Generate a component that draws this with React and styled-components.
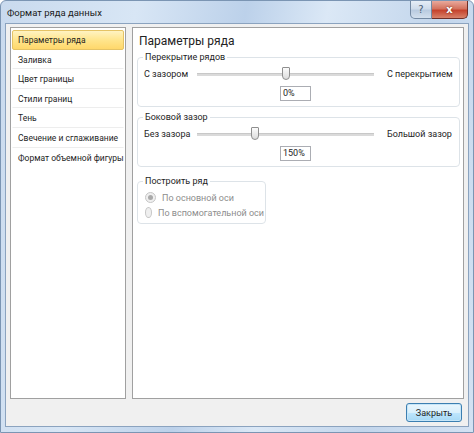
import React from 'react';
import styled, { createGlobalStyle } from 'styled-components';

const GlobalStyle = createGlobalStyle`
  html, body { margin: 0; padding: 0; background: #ffffff; }
  body { font-family: Roboto, "Noto Sans", sans-serif; font-size: 9px; color: #1e1e1e; }
`;

const Window = styled.div`
  width: 474px;
  height: 433px;
  box-sizing: border-box;
  display: flex;
  flex-direction: column;
  border: 1px solid #7b95b3;
  border-radius: 6px 6px 0 0;
  background: linear-gradient(100deg, #c9daee 0%, #d8e6f5 25%, #bcd1ea 45%, #dbe8f6 60%, #c3d6ec 80%, #d3e2f3 100%);
  overflow: hidden;
`;

const TitleBar = styled.div`
  height: 22px;
  display: flex;
  align-items: flex-start;
  padding-left: 6px;
`;

const Title = styled.div`
  font-size: 9.5px;
  line-height: 23px;
  color: #1b1b1b;
`;

const Controls = styled.div`
  margin-left: auto;
  margin-right: 5px;
  display: flex;
`;

const CtrlButton = styled.div`
  height: 18px;
  width: ${(p) => (p.wide ? '36px' : '22px')};
  box-sizing: border-box;
  display: flex;
  align-items: center;
  justify-content: center;
  font-family: "DejaVu Sans", sans-serif;
  font-size: 10px;
  font-weight: ${(p) => (p.wide ? 'bold' : 'normal')};
  color: ${(p) => (p.wide ? '#ffffff' : '#4b5d74')};
  border: 1px solid ${(p) => (p.wide ? '#6e2e27' : '#7389a3')};
  border-top: none;
  border-left: ${(p) => (p.wide ? 'none' : undefined)};
  border-radius: ${(p) => (p.wide ? '0 0 5px 0' : '0 0 0 5px')};
  background: ${(p) =>
    p.wide
      ? 'linear-gradient(#e9a99c 0%, #d4735f 45%, #c5432d 55%, #d8826a 100%)'
      : 'linear-gradient(#e6eef7 0%, #cfdceb 45%, #b9cbe0 55%, #d3e0ee 100%)'};
  text-shadow: ${(p) => (p.wide ? '0 0 2px #5a1a12' : 'none')};
`;

const Body = styled.div`
  flex: 1;
  margin: 0 4px 5px 4px;
  border: 1px solid #8ba3bf;
  background: #f0f0f0;
  display: flex;
  flex-direction: column;
  padding: 3px 4px 4px 4px;
`;

const Main = styled.div`
  flex: 1;
  display: flex;
  gap: 6px;
`;

const Nav = styled.div`
  width: 116px;
  box-sizing: border-box;
  background: #ffffff;
  border: 1px solid #a0a0a0;
  padding: 2px 1px;
  display: flex;
  flex-direction: column;
`;

const NavItem = styled.div`
  box-sizing: border-box;
  height: 19.6px;
  line-height: 18px;
  padding-left: 5px;
  font-size: 8.5px;
  white-space: nowrap;
  border: 1px solid ${(p) => (p.active ? '#e5c365' : 'transparent')};
  border-bottom: 1px solid ${(p) => (p.active ? '#e5c365' : '#ededed')};
  border-radius: ${(p) => (p.active ? '2px' : '0')};
  background: ${(p) => (p.active ? 'linear-gradient(#fff3c2 0%, #ffe58d 50%, #ffd86b 100%)' : 'transparent')};
  &:last-child { border-bottom-color: transparent; }
`;

const Panel = styled.div`
  flex: 1;
  background: #ffffff;
  border: 1px solid #a0a0a0;
  padding: 4px 3px 0 4px;
  display: flex;
  flex-direction: column;
  align-items: stretch;
`;

const PanelTitle = styled.div`
  font-size: 12px;
  line-height: 18px;
  color: #222;
  padding-left: 2px;
  margin-bottom: 1px;
`;

const Group = styled.fieldset`
  margin: ${(p) => (p.narrow ? '4px' : '0')} 0 4px 0;
  padding: 3px 6px ${(p) => (p.narrow ? '3px' : '5px')} 6px;
  border: 1px solid #dde3e8;
  border-radius: 4px;
  min-width: 0;
  align-self: ${(p) => (p.narrow ? 'flex-start' : 'stretch')};
  width: ${(p) => (p.narrow ? '115px' : 'auto')};
`;

const Legend = styled.legend`
  font-size: 9px;
  line-height: 12px;
  padding: 0 2px;
  margin-left: -1px;
  color: #1e1e1e;
`;

const SliderRow = styled.div`
  display: flex;
  align-items: center;
  height: 16px;
`;

const EdgeLabel = styled.span`
  font-size: 9px;
  width: ${(p) => (p.right ? 'auto' : '53px')};
  margin-left: ${(p) => (p.right ? '13px' : '0')};
  white-space: nowrap;
`;

const Track = styled.div`
  position: relative;
  flex: 0 0 177px;
  height: 2px;
  background: #dadada;
  border-top: 1px solid #c8c8c8;
`;

const Thumb = styled.div`
  position: absolute;
  top: -7px;
  width: 8px;
  height: 13px;
  margin-left: -4px;
  box-sizing: border-box;
  border: 1px solid #8f8f8f;
  border-radius: 1px 1px 4px 4px;
  background: linear-gradient(#fbfbfb, #dcdcdc);
`;

const ValueRow = styled.div`
  display: flex;
  justify-content: center;
  padding-top: 4px;
  margin-right: 6px;
`;

const ValueBox = styled.div`
  width: 31px;
  height: 15px;
  box-sizing: border-box;
  border: 1px solid #abadb3;
  font-size: 9px;
  line-height: 13px;
  padding-left: 2px;
  background: #fff;
`;

const Radio = styled.div`
  display: flex;
  align-items: center;
  gap: 6px;
  height: 15px;
  font-size: 9px;
  color: #8d8d8d;
  white-space: nowrap;
  padding-left: 1px;
`;

const RadioDot = styled.span`
  width: 9px;
  height: 9px;
  border-radius: 50%;
  border: 1px solid #c6c6c6;
  background: #efefef;
  display: flex;
  align-items: center;
  justify-content: center;
  &::after {
    content: '';
    width: 5px;
    height: 5px;
    border-radius: 50%;
    background: ${(p) => (p.checked ? '#a9a9a9' : 'transparent')};
  }
`;

const Footer = styled.div`
  display: flex;
  justify-content: flex-end;
  padding-top: 4px;
  padding-right: 2px;
`;

const Button = styled.button`
  width: 56px;
  height: 19px;
  font-family: inherit;
  font-size: 9px;
  color: #1e1e1e;
  border: 1px solid #3c7fb1;
  border-radius: 3px;
  background: linear-gradient(#eaf6fd 0%, #d9f0fc 50%, #bee6fd 51%, #a7d9f5 100%);
  box-shadow: inset 0 0 0 1px #c7e6f8;
  padding: 0;
`;

const navItems = [
  'Параметры ряда',
  'Заливка',
  'Цвет границы',
  'Стили границ',
  'Тень',
  'Свечение и сглаживание',
  'Формат объемной фигуры',
];

const Slider = ({ left, right, pos, value }) => (
  <>
    <SliderRow>
      <EdgeLabel>{left}</EdgeLabel>
      <Track>
        <Thumb style={{ left: `${pos}%` }} />
      </Track>
      <EdgeLabel right>{right}</EdgeLabel>
    </SliderRow>
    <ValueRow>
      <ValueBox>{value}</ValueBox>
    </ValueRow>
  </>
);

const App = () => (
  <>
    <GlobalStyle />
    <Window>
      <TitleBar>
        <Title>Формат ряда данных</Title>
        <Controls>
          <CtrlButton>?</CtrlButton>
          <CtrlButton wide>x</CtrlButton>
        </Controls>
      </TitleBar>
      <Body>
        <Main>
          <Nav>
            {navItems.map((item, index) => (
              <NavItem key={index} active={index === 0}>
                {item}
              </NavItem>
            ))}
          </Nav>
          <Panel>
            <PanelTitle>Параметры ряда</PanelTitle>
            <Group>
              <Legend>Перекрытие рядов</Legend>
              <Slider left="С зазором" right="С перекрытием" pos={50} value="0%" />
            </Group>
            <Group>
              <Legend>Боковой зазор</Legend>
              <Slider left="Без зазора" right="Большой зазор" pos={33} value="150%" />
            </Group>
            <Group narrow>
              <Legend>Построить ряд</Legend>
              <Radio>
                <RadioDot checked />
                По основной оси
              </Radio>
              <Radio>
                <RadioDot />
                По вспомогательной оси
              </Radio>
            </Group>
          </Panel>
        </Main>
        <Footer>
          <Button>Закрыть</Button>
        </Footer>
      </Body>
    </Window>
  </>
);

export default App;
